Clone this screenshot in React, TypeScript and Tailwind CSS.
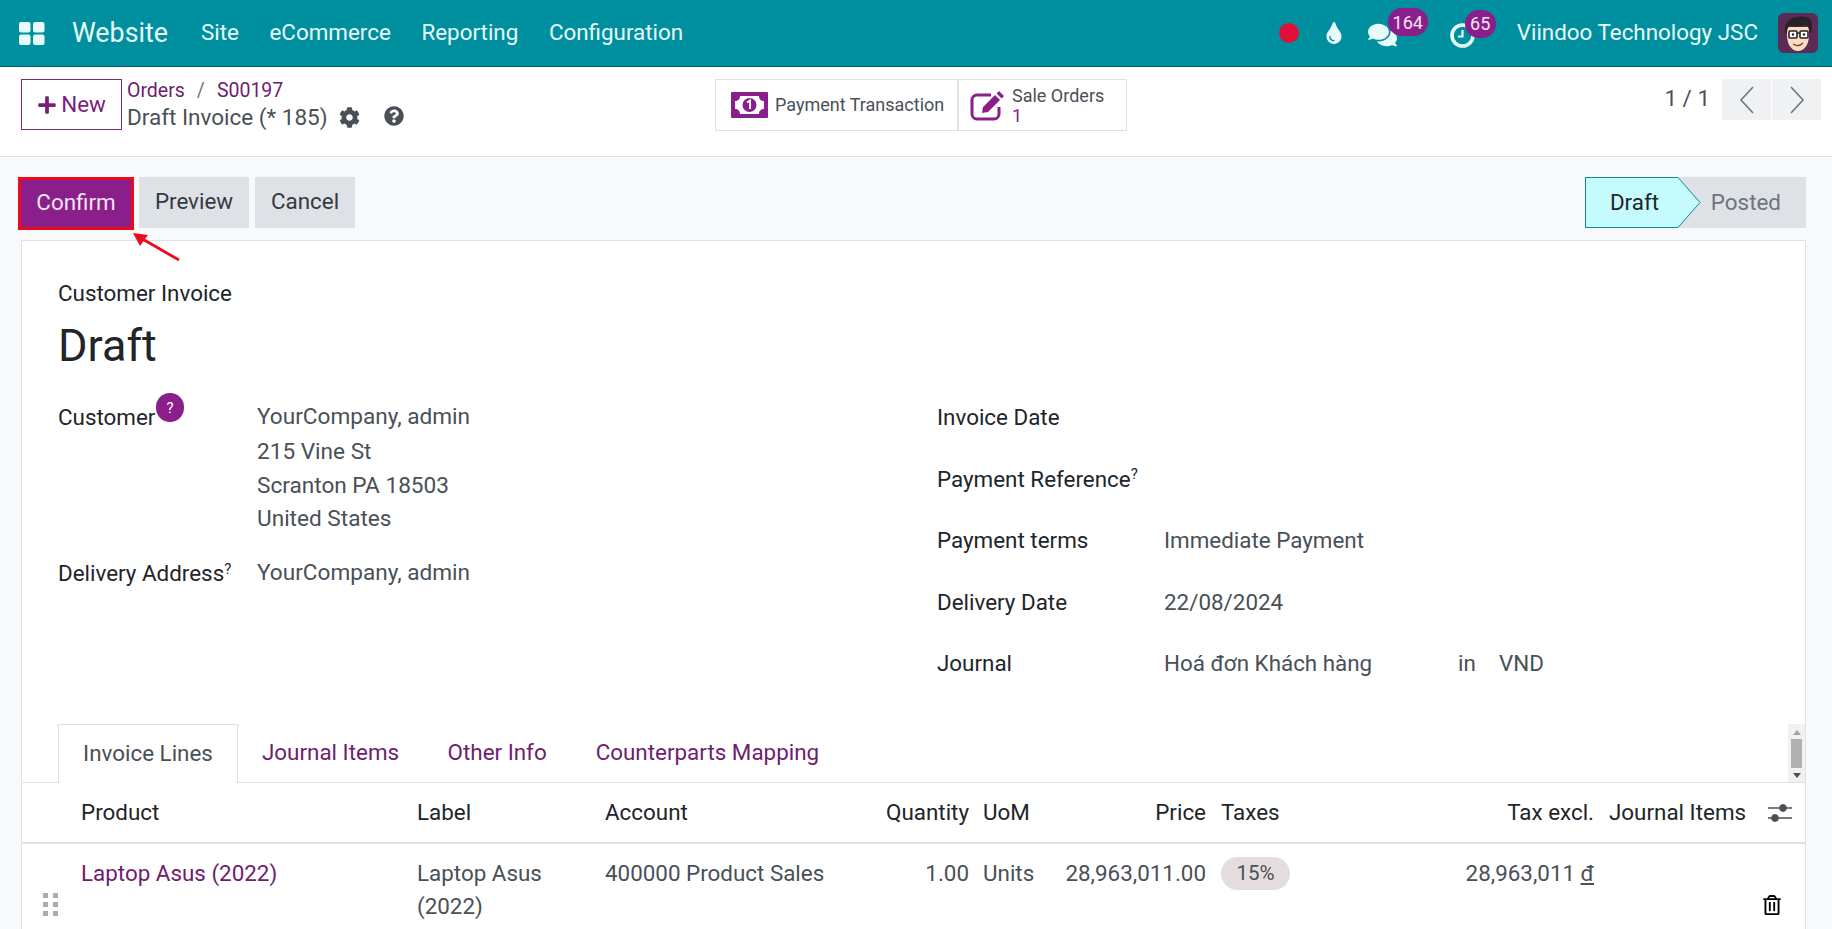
import { FaCog, FaComments, FaPlus, FaQuestionCircle, FaRegTrashAlt, FaTint } from 'react-icons/fa'

const MENU = ['Site', 'eCommerce', 'Reporting', 'Configuration']

function AppsIcon() {
  return (
    <svg width="26" height="23" viewBox="0 0 26 23" className="fill-[#e8fbfc]">
      <rect x="0" y="0" width="11.5" height="10.5" rx="2" />
      <rect x="14" y="0" width="11.5" height="10.5" rx="2" />
      <rect x="0" y="12.5" width="11.5" height="10.5" rx="2" />
      <rect x="14" y="12.5" width="11.5" height="10.5" rx="2" />
    </svg>
  )
}

function Avatar() {
  return (
    <svg width="40" height="40" viewBox="0 0 40 40">
      <rect width="40" height="40" rx="6" fill="#5b2a55" />
      <path d="M9 22c0 10 5 16 11 16s11-6 11-16V14H9z" fill="#fbdcc0" />
      <path d="M7 20c-1-9 3-15 12-16 4-1 10-1 13 2 3 4 2 9 1 14l-2-1c0-4-1-6-3-7-5 2-11 2-16 1-2 1-3 3-3 7z" fill="#2a2226" />
      <rect x="11" y="18" width="8" height="7" rx="1" fill="#fff" stroke="#2a2226" strokeWidth="1.6" />
      <rect x="22" y="18" width="8" height="7" rx="1" fill="#fff" stroke="#2a2226" strokeWidth="1.6" />
      <path d="M19 20h3" stroke="#2a2226" strokeWidth="1.4" />
      <circle cx="15" cy="21.5" r="1.2" fill="#2a2226" />
      <circle cx="26" cy="21.5" r="1.2" fill="#2a2226" />
      <path d="M15 31c3 2 7 2 10-1" stroke="#7a3b2e" strokeWidth="1.3" fill="none" />
    </svg>
  )
}

function ClockIcon() {
  return (
    <svg width="25" height="25" viewBox="0 0 25 25" fill="none" stroke="#e8fbfc" className="translate-y-[2px]">
      <circle cx="12.5" cy="12.5" r="10.5" strokeWidth="3.6" />
      <path d="M12.5 7v6.5H8" strokeWidth="2.2" />
    </svg>
  )
}

function BillIcon() {
  return (
    <svg width="37" height="26" viewBox="0 0 37 26">
      <rect width="37" height="26" rx="1" fill="#8a1e8b" />
      <path d="M9 4h19c0 3 2 5 5 5v8c-3 0-5 2-5 5H9c0-3-2-5-5-5V9c3 0 5-2 5-5z" fill="#fff" />
      <circle cx="18.5" cy="13" r="7" fill="#8a1e8b" />
      <path d="M16 10.5 19 8.6v8.4" stroke="#fff" strokeWidth="2" fill="none" />
    </svg>
  )
}

function EditIcon() {
  return (
    <svg width="35" height="31" viewBox="0 0 35 31">
      <path d="M21 5H7a5 5 0 0 0-5 5v14a5 5 0 0 0 5 5h17a5 5 0 0 0 5-5v-7" fill="none" stroke="#8a1e8b" strokeWidth="3" />
      <path d="M29 1l5 5-2.4 2.4-5-5zM25 5l5 5-12 12-6 1 1-6z" fill="#8a1e8b" />
    </svg>
  )
}

function PagerArrow({ d }: { d: string }) {
  return (
    <svg width="16" height="28" viewBox="0 0 16 28" fill="none" stroke="#6c757d" strokeWidth="1.6">
      <path d={d} />
    </svg>
  )
}

function Badge({ children, className }: { children: React.ReactNode; className: string }) {
  return (
    <span className={`absolute flex h-[28px] items-center justify-center rounded-full bg-[#8a1e8b] text-[18px] text-[#f3e6f3] ${className}`}>
      {children}
    </span>
  )
}

function Navbar() {
  return (
    <nav className="flex h-[67px] shrink-0 items-center border-b border-[#005f69] bg-[#008f9e] text-[#e8fbfc]">
      <div className="ml-[19px]"><AppsIcon /></div>
      <span className="ml-[27px] text-[26.8px]">Website</span>
      <div className="ml-[33px] flex gap-[30.6px] text-[22.4px]">
        {MENU.map(m => <span key={m}>{m}</span>)}
      </div>
      <div className="ml-auto flex items-center">
        <span className="h-[20px] w-[20px] rounded-full bg-[#e0103a]" />
        <FaTint className="ml-[26px] h-[22px] w-[18px]" />
        <span className="relative ml-[25px] flex">
          <FaComments className="h-[26px] w-[29px] translate-y-[2px]" />
          <Badge className="left-[20px] top-[-12px] w-[40px]">164</Badge>
        </span>
        <span className="relative ml-[53px] flex">
          <ClockIcon />
          <Badge className="left-[15px] top-[-11px] w-[31px]">65</Badge>
        </span>
        <span className="ml-[42px] text-[22.4px]">Viindoo Technology JSC</span>
        <span className="ml-[20px] mr-[14px]"><Avatar /></span>
      </div>
    </nav>
  )
}

function ControlPanel() {
  return (
    <div className="flex h-[90px] shrink-0 border-b border-[#dee2e6] bg-white pt-[12px]">
      <button className="ml-[21px] flex h-[51px] w-[101px] items-center justify-center gap-[4px] border border-[#7c2a7e] text-[22.4px] text-[#7c1d7e]">
        <FaPlus className="h-[20px] w-[20px]" />New
      </button>
      <div className="ml-[5px] flex flex-col text-[#495057]">
        <div className="mt-[1px] flex h-[21px] items-center text-[19.5px] text-[#6e1d6f]">
          Orders<span className="mx-[12px] text-[#6c757d]">/</span>S00197
        </div>
        <div className="mt-[2px] flex items-center text-[22.5px] leading-[28px]">
          Draft Invoice (* 185)
          <FaCog className="ml-[11px] h-[21px] w-[21px]" />
          <FaQuestionCircle className="ml-[24px] h-[20px] w-[20px] -translate-y-[1px]" />
        </div>
      </div>
      <div className="absolute left-[715px] flex h-[52px] w-[412px] border border-[#dee2e6] text-[#495057]">
        <div className="flex w-[243px] items-center border-r-2 border-[#dee2e6] pl-[15px]">
          <BillIcon />
          <span className="ml-[7px] -translate-y-[1px] text-[18px]">Payment Transaction</span>
        </div>
        <div className="flex flex-1 items-center pl-[11px]">
          <EditIcon />
          <div className="ml-[7px] translate-y-[1px] text-[18px] leading-[20px]">
            <div>Sale Orders</div>
            <div className="text-[#8a1e8b]">1</div>
          </div>
        </div>
      </div>
      <div className="ml-auto mr-[11px] flex items-start">
        <span className="mt-[5px] text-[22.4px] leading-[28px] text-[#495057]">1 / 1</span>
        <div className="ml-[12px] flex h-[41px] gap-px">
          <span className="flex w-[49px] items-center justify-center bg-[#f0f1f2]"><PagerArrow d="M14 1 2 14l12 13" /></span>
          <span className="flex w-[49px] items-center justify-center bg-[#f0f1f2]"><PagerArrow d="M2 1l12 13L2 27" /></span>
        </div>
      </div>
    </div>
  )
}

function ActionBar() {
  return (
    <div className="flex h-[83px] shrink-0 pt-[20px]">
      <button className="ml-[18px] h-[53px] w-[116px] border-[3px] border-[#ee0a1e] bg-[#8a1e8b] pb-[2px] text-[22.4px] text-[#f3e6f3]">Confirm</button>
      <button className="ml-[5px] h-[51px] w-[110px] bg-[#dee2e6] pb-[2px] text-[22.4px] text-[#343a40]">Preview</button>
      <button className="ml-[6px] h-[51px] w-[100px] bg-[#dee2e6] pb-[2px] text-[22.4px] text-[#343a40]">Cancel</button>
      <div className="ml-auto mr-[26px] flex h-[51px] text-[22.4px]">
        <div className="relative flex w-[93px] items-center justify-center border border-r-0 border-[#0d8a97] bg-[#c6fbfd] pl-[5px] text-[#212529]">
          Draft
        </div>
        <svg width="23" height="51" viewBox="0 0 23 51" className="z-10 -mr-[1px]">
          <path d="M0 .5 22 25.5 0 50.5" fill="#c6fbfd" stroke="#0d8a97" />
        </svg>
        <div className="-ml-[23px] flex w-[129px] items-center justify-end bg-[#dee2e6] pr-[25px] text-[#6c757d]">Posted</div>
      </div>
      <svg width="50" height="32" viewBox="0 0 50 32" className="absolute left-[132px] top-[233px]">
        <path d="M47 27 7 4" stroke="#ee0a1e" strokeWidth="2.8" />
        <path d="M1 0l15 2-8 11z" fill="#ee0a1e" />
      </svg>
    </div>
  )
}

function Field({ label, children, sup }: { label: string; children?: React.ReactNode; sup?: boolean }) {
  return (
    <div className="flex h-[30px] items-center">
      <span className="w-[227px] shrink-0 text-[#212529]">
        {label}{sup && <sup className="text-[15px]">?</sup>}
      </span>
      <span className="flex text-[#495057]">{children}</span>
    </div>
  )
}

function Tabs() {
  return (
    <div className="relative mt-[45px] flex h-[59px] shrink-0 border-b border-[#dee2e6] pl-[36px] text-[#6e1d6f]">
      <span className="z-10 flex h-[59px] w-[180px] items-center justify-center border border-b-0 border-[#dee2e6] bg-white text-[#495057]">Invoice Lines</span>
      <span className="ml-[24px] flex items-center">Journal Items</span>
      <span className="ml-[48.5px] flex items-center">Other Info</span>
      <span className="ml-[49px] flex items-center">Counterparts Mapping</span>
      <div className="absolute right-0 top-0 flex h-[58px] w-[17px] flex-col items-center bg-[#f1f1f1]">
        <span className="mt-[6px] h-0 w-0 border-x-[4px] border-b-[5px] border-x-transparent border-b-[#a3a3a3]" />
        <span className="mt-[4px] h-[29px] w-[11px] bg-[#b0b0b0]" />
        <span className="mt-[5px] h-0 w-0 border-x-[4px] border-t-[5px] border-x-transparent border-t-[#505050]" />
      </div>
    </div>
  )
}

function Lines() {
  return (
    <div>
      <div className="grid h-[61px] grid-cols-[59px_336px_188px_364px_91px_146px_94px_294px_166px_47px] items-center border-b-2 border-[#dee2e6] text-[#212529]">
        <div />
        <div>Product</div>
        <div>Label</div>
        <div>
          <span>Account</span>
          <span className="float-right">Quantity</span>
        </div>
        <div className="pl-[14px]">UoM</div>
        <div className="text-right">Price</div>
        <div className="pl-[15px]">Taxes</div>
        <div className="text-right">Tax excl.</div>
        <div className="pl-[15px]">Journal Items</div>
        <div className="pl-[8px]">
          <svg width="24" height="22" viewBox="0 0 24 22" className="fill-[#495057] stroke-[#495057]">
            <path d="M0 6h24M0 16h24" strokeWidth="1.6" />
            <circle cx="15" cy="6" r="3.4" />
            <circle cx="7" cy="16" r="3.4" />
          </svg>
        </div>
      </div>
      <div className="grid grid-cols-[59px_336px_188px_364px_91px_146px_94px_294px_166px_47px] pt-[13px] leading-[33px] text-[#495057]">
        <div className="relative">
          <span className="absolute left-[21px] top-[36px] grid grid-cols-2 gap-x-[5px] gap-y-[4px]">
            {[0, 1, 2, 3, 4, 5].map(i => <span key={i} className="h-[5px] w-[5px] bg-[#a8adb2]" />)}
          </span>
        </div>
        <div className="text-[#6e1d6f]">Laptop Asus (2022)</div>
        <div className="w-[150px]">Laptop Asus (2022)</div>
        <div className="flex justify-between"><span>400000 Product Sales</span><span>1.00</span></div>
        <div className="pl-[14px]">Units</div>
        <div className="text-right">28,963,011.00</div>
        <div className="pl-[15px]">
          <span className="flex h-[33px] w-[69px] items-center justify-center rounded-full bg-[#e5dddd] text-[20.5px]">15%</span>
        </div>
        <div className="text-right">28,963,011 <span className="underline">đ</span></div>
        <div />
        <div className="pl-[3px]">
          <FaRegTrashAlt className="mt-[38px] h-[20px] w-[18px] text-black" />
        </div>
      </div>
    </div>
  )
}

function Sheet() {
  return (
    <div className="ml-[21px] mr-[26px] flex flex-1 flex-col border-x border-t border-[#dee2e6] bg-white text-[22.4px]">
      <div className="px-[36px]">
        <div className="mt-[38px] leading-[28px] text-[#212529]">Customer Invoice</div>
        <h1 className="mt-[13px] text-[45px] leading-[52px] text-[#212529]">Draft</h1>
      </div>
      <div className="mt-[28px] flex px-[36px]">
        <div className="w-[879px]">
          <div className="flex">
            <span className="relative w-[199px] leading-[34px] text-[#212529]">
              Customer
              <span className="absolute left-[98px] top-[-7px] flex h-[29px] w-[28px] items-center justify-center rounded-full bg-[#8a1e8b] text-[15px] text-white">?</span>
            </span>
            <div className="flex flex-col text-[22.6px] leading-[34px] text-[#495057]">
              <span>YourCompany, admin</span>
              <span className="translate-y-[1px]">215 Vine St</span>
              <span className="translate-y-[1px]">Scranton PA 18503</span>
              <span>United States</span>
            </div>
          </div>
          <div className="mt-[20px] flex">
            <span className="w-[199px] leading-[34px] text-[#212529]">Delivery Address<sup className="text-[15px]">?</sup></span>
            <span className="text-[22.6px] leading-[34px] text-[#495057]">YourCompany, admin</span>
          </div>
        </div>
        <div className="flex flex-1 flex-col gap-[31.5px] pt-[3px]">
          <Field label="Invoice Date" />
          <Field label="Payment Reference" sup />
          <Field label="Payment terms">Immediate Payment</Field>
          <Field label="Delivery Date">22/08/2024</Field>
          <Field label="Journal">
            <span className="w-[294px]">Hoá đơn Khách hàng</span>
            <span className="w-[41px]">in</span>
            <span>VND</span>
          </Field>
        </div>
      </div>
      <Tabs />
      <Lines />
    </div>
  )
}

export default function App() {
  return (
    <div className="relative flex h-[929px] flex-col overflow-hidden bg-[#f8f9fa] font-['Roboto',sans-serif]">
      <Navbar />
      <ControlPanel />
      <ActionBar />
      <Sheet />
    </div>
  )
}
